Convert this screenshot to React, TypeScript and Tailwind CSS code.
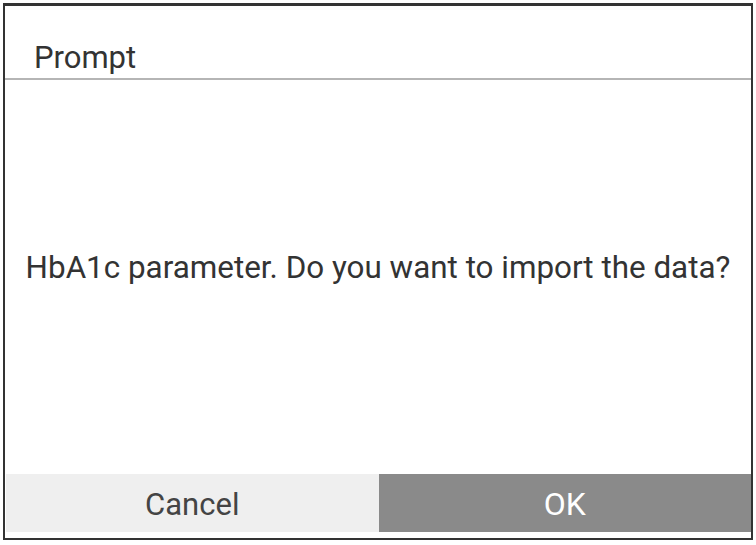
import React from "react";

export default function App() {
  return (
    <div className="w-[756px] h-[545px] bg-white pt-[3px] pl-[3px]" style={{ fontFamily: "Roboto, 'Noto Sans', sans-serif" }}>
      <div className="w-[750px] h-[537px] border-[2px] border-t-[3px] border-[#333] flex flex-col">
        <div className="h-[72px] shrink-0 flex items-end pl-[29px] pb-[3px] text-[31px] text-[#333] leading-none">
          <span className="pb-[2px]">Prompt</span>
        </div>
        <div className="h-[2px] bg-[#b5b5b5] shrink-0" />
        <div className="flex-1 flex items-center justify-center text-[31.4px] text-[#333] pb-[18px]">
          HbA1c parameter. Do you want to import the data?
        </div>
        <div className="h-[58px] shrink-0 flex pl-[1px]">
          <div className="flex-1 bg-[#efefef] flex items-center justify-center text-[31px] text-[#444] pt-[4px]">Cancel</div>
          <div className="flex-1 bg-[#8a8a8a] flex items-center justify-center text-[32px] text-white pt-[2px]">OK</div>
        </div>
        <div className="h-[6px] shrink-0" />
      </div>
    </div>
  );
}
